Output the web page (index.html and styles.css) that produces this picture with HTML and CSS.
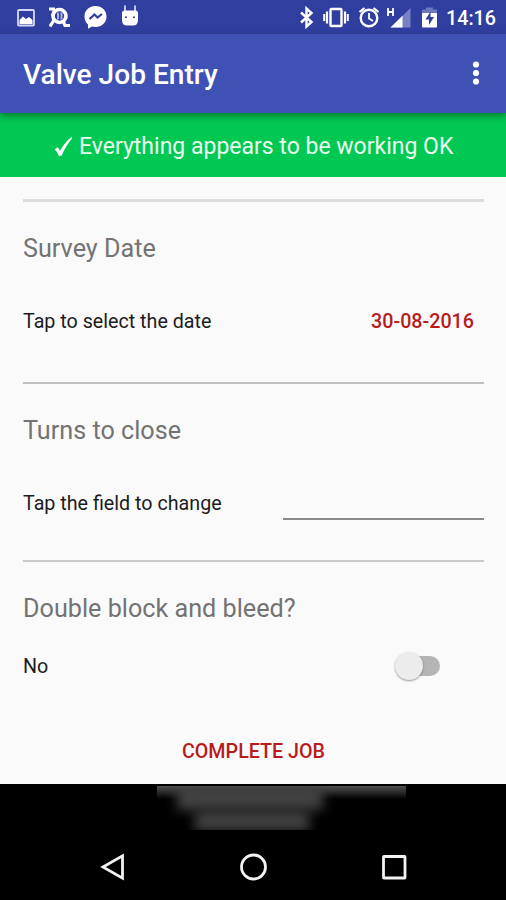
FILE: index.html
```
<!DOCTYPE html>
<html lang="en">
<head>
    <meta charset="UTF-8">
    <meta name="viewport" content="width=device-width, initial-scale=1.0">
    <title>Valve Job Entry</title>
    <link rel="stylesheet" href="styles.css">
</head>
<body>

    <!-- Status bar -->
    <div class="status-bar">
        <div class="notifications">
            <svg width="18" height="34" viewBox="0 0 18 34">
                <rect x="1" y="10" width="16" height="15.5" rx="1" fill="none" stroke="#d5d8f3" stroke-width="1.8"/>
                <path d="M2.500 24v-4l3.500-3.500 3 2.500 3-2 3.500 3v4z" fill="#fff"/>
            </svg>
            <svg width="21" height="34" viewBox="0 0 21 34" fill="none" stroke="#fff">
                <path d="M0 9h6M5.500 10L3.500 16M5 20L1 26.500M14 21l2 4.500h5" stroke-width="3.200"/>
                <circle cx="10.500" cy="16" r="6.500" stroke-width="3.600"/>
                <path d="M9 12.500v7M12.500 12.500v7" stroke="#aab2e2" stroke-width="2"/>
            </svg>
            <svg width="23" height="34" viewBox="0 0 23 34">
                <path d="M11.500 6C5.200 6 .5 10.600.5 16.500c0 3.400 1.400 6 3.500 8v4.300l4-2.300c1.100.3 2.300.5 3.500.5C17.800 27 22.500 22.400 22.500 16.500S17.800 6 11.500 6z" fill="#fff"/>
                <path d="M5.500 19l5-4.500 3 3L18 14" fill="none" stroke="#303f9f" stroke-width="2.200"/>
            </svg>
            <svg width="18" height="34" viewBox="0 0 18 34">
                <path d="M4 5.500v6M14 5.500v6" stroke="#fff" stroke-width="1.400"/>
                <path d="M1 13q0-2.500 2.500-2.500h11q2.500 0 2.500 2.500v7q0 5.500-5 5.500H6q-5 0-5-5.500z" fill="#fff"/>
                <circle cx="5" cy="17.300" r="1" fill="#303f9f"/>
                <circle cx="13" cy="17.300" r="1" fill="#303f9f"/>
            </svg>
        </div>
        <div class="system">
            <svg width="15" height="34" viewBox="0 0 15 34">
                <path d="M2 12.500l10.500 9.500-5 4.500v-18l5 4.500L2 22.500" fill="none" stroke="#fff" stroke-width="2.400"/>
            </svg>
            <svg width="26" height="34" viewBox="0 0 26 34" fill="none" stroke="#fff">
                <rect x="7.500" y="9" width="11" height="17" rx="1" stroke-width="2.400"/>
                <path d="M4 11.500v12M22 11.500v12" stroke-width="2.200"/>
                <path d="M1.200 14v7M24.800 14v7" stroke-width="2"/>
            </svg>
            <svg width="22" height="34" viewBox="0 0 22 34" fill="none" stroke="#fff">
                <circle cx="11" cy="18" r="8.300" stroke-width="2.400"/>
                <path d="M11 13v5.500l4 2.500" stroke-width="1.800"/>
                <path d="M1.500 12l5-4M20.500 12l-5-4" stroke-width="2.200"/>
            </svg>
            <svg class="signal" width="24" height="34" viewBox="0 0 24 34">
                <path d="M23.500 8v19.500H3.500z" fill="#7682c5"/>
                <path d="M15.500 15.800v11.700h-12z" fill="#fff"/>
                <path d="M1 8v8M6 8v8M1 12H6" stroke="#fff" stroke-width="1.800"/>
            </svg>
            <svg width="15" height="34" viewBox="0 0 15 34">
                <path d="M0 9.500h4V7.500h7v2h4V14H0z" fill="#6c78bf"/>
                <path d="M0 13h15v13.500q0 1-1 1H1q-1 0-1-1z" fill="#fff"/>
                <path d="M8.500 11.500L3.500 19.500H7v5.500l5-8H8.500z" fill="#303f9f"/>
            </svg>
            <span class="clock">14:16</span>
        </div>
    </div>

    <!-- Toolbar -->
    <header class="toolbar">
        <h1>Valve Job Entry</h1>
        <svg width="8" height="26" viewBox="0 0 8 26" fill="#fff">
            <circle cx="4" cy="4.500" r="3.100"/>
            <circle cx="4" cy="13" r="3.100"/>
            <circle cx="4" cy="21.500" r="3.100"/>
        </svg>
    </header>

    <div class="banner">
        <svg width="20" height="22" viewBox="0 0 20 22">
            <path d="M.8 13.200l2.700-2c1.100 1.100 1.900 2.300 2.500 3.600C8.600 9.800 12.200 5.200 17.400 1.200l1 .8C13.700 7.500 10.300 13 7.800 19.500l-2.700.7C4 17.600 2.600 15.300.8 13.200z" fill="#fff"/>
        </svg>
        <span>Everything appears to be working OK</span>
    </div>

    <!-- Job form -->
    <main class="form">
        <section class="date">
            <h2>Survey Date</h2>
            <div class="row">
                <span class="hint">Tap to select the date</span>
                <button class="date-button">30-08-2016</button>
            </div>
        </section>

        <section class="turns">
            <h2>Turns to close</h2>
            <div class="row">
                <span class="hint">Tap the field to change</span>
                <input type="text" class="field">
            </div>
        </section>

        <section class="bleed">
            <h2>Double block and bleed?</h2>
            <div class="row">
                <span class="hint">No</span>
                <div class="switch"><div class="thumb"></div></div>
            </div>
        </section>

        <button class="complete">COMPLETE JOB</button>
    </main>

    <!-- Blurred caption behind the navigation area -->
    <div class="shade">
        <div class="smudge">
            <div class="smear top"></div>
            <div class="smear bottom"></div>
        </div>
    </div>

    <!-- Navigation bar -->
    <nav class="nav-bar">
        <svg width="28" height="30" viewBox="0 0 28 30">
            <path d="M5 15L24.500 3.800v22.400z"/>
        </svg>
        <svg width="28" height="30" viewBox="0 0 28 30">
            <circle cx="14.500" cy="15" r="12"/>
        </svg>
        <svg width="28" height="30" viewBox="0 0 28 30">
            <rect x="3.500" y="4.500" width="21.500" height="21.500" rx=".5"/>
        </svg>
    </nav>

</body>
</html>
```

FILE: styles.css
```
/* General styling for the page */
* {
    box-sizing: border-box;
}

body {
    margin: 0;
    width: 506px;
    height: 900px;
    overflow: hidden;
    display: flex;
    flex-direction: column;
    font-family: Roboto, sans-serif;
    background-color: #fafafa;
}

svg {
    display: block;
    flex: none;
}

h1, h2 {
    margin: 0;
    white-space: nowrap;
}

button {
    padding: 0;
    border: none;
    background: none;
    font-family: inherit;
    font-size: 19.7px;
    font-weight: 500;
    color: #b71c1c;
    cursor: pointer;
}

/* Status bar */
.status-bar {
    height: 34px;
    flex: none;
    display: flex;
    justify-content: space-between;
    padding: 0 11px 0 17px;
    background: #303f9f;
}

.notifications {
    display: flex;
    gap: 14px;
}

.system {
    display: flex;
    gap: 9px;
}

.signal {
    margin: 0 2px 0 -2px;
}

.clock {
    width: 49px;
    line-height: 37px;
    font-size: 19.7px;
    font-weight: 500;
    color: #fff;
    white-space: nowrap;
}

/* Toolbar */
.toolbar {
    position: relative;
    height: 79px;
    flex: none;
    display: flex;
    align-items: center;
    justify-content: space-between;
    padding: 0 26px 1px 23px;
    background: #3f51b5;
    box-shadow: 0 3px 7px rgba(0, 0, 0, 0.4);
}

.toolbar h1 {
    padding-top: 3px;
    font-size: 28.1px;
    font-weight: 500;
    color: #fff;
}

/* Working / not working banner */
.banner {
    height: 64px;
    flex: none;
    display: flex;
    align-items: center;
    gap: 5px;
    padding: 3px 0 0 54px;
    background: #00c853;
    font-size: 23px;
    color: #e8ffef;
    white-space: nowrap;
}

/* Form sections */
.form {
    height: 607px;
    flex: none;
    padding: 22px 22px 0 23px;
    display: flex;
    flex-direction: column;
}

section {
    flex: none;
    padding-top: 30px;
    border-top: 2px solid #cacaca;
}

.date {
    height: 183px;
    border-top: 3px solid #dcdcdc;
}

.turns {
    height: 178px;
    border-color: #c0c0c0;
}

.bleed {
    height: 154px;
}

h2 {
    line-height: 34px;
    font-size: 25.2px;
    font-weight: 400;
    color: #737373;
}

.row {
    display: flex;
    align-items: center;
    justify-content: space-between;
    height: 50px;
    margin-top: 30px;
}

.date .row {
    padding-right: 10px;
}

.hint {
    font-size: 19.7px;
    color: #1c1c1c;
    white-space: nowrap;
}

.field {
    align-self: flex-end;
    width: 201px;
    height: 34px;
    margin-bottom: 8px;
    border: none;
    border-bottom: 2px solid #8a8a8a;
    background: none;
    outline: none;
}

/* Toggle switch */
.switch {
    width: 38px;
    height: 20px;
    margin-right: 44px;
    border-radius: 10px;
    background: #b5b5b5;
}

.bleed .row {
    margin-top: 15px;
}

.thumb {
    width: 28px;
    height: 28px;
    margin: -4px 0 0 -7px;
    border-radius: 50%;
    background: #ececec;
    box-shadow: 0 1px 2px rgba(0, 0, 0, 0.4);
}

.complete {
    align-self: center;
    height: 30px;
    margin-top: 22px;
}

/* Bottom area */
.shade {
    height: 46px;
    flex: none;
    padding: 2px 0 0 157px;
    background: #000;
}

.smudge {
    width: 249px;
    height: 44px;
    overflow: hidden;
    background: linear-gradient(#505050, #000 13px);
}

.smear {
    background: #424242;
    filter: blur(6px);
}

.smear.top {
    width: 146px;
    height: 24px;
    margin-left: 20px;
}

.smear.bottom {
    width: 114px;
    height: 20px;
    margin: 1px 0 0 38px;
}

.nav-bar {
    height: 70px;
    flex: none;
    display: flex;
    justify-content: center;
    align-items: center;
    gap: 113px;
    padding-top: 3px;
    background: #000;
}

.nav-bar svg {
    fill: none;
    stroke: #f2f2f2;
    stroke-width: 2.8;
}
```
